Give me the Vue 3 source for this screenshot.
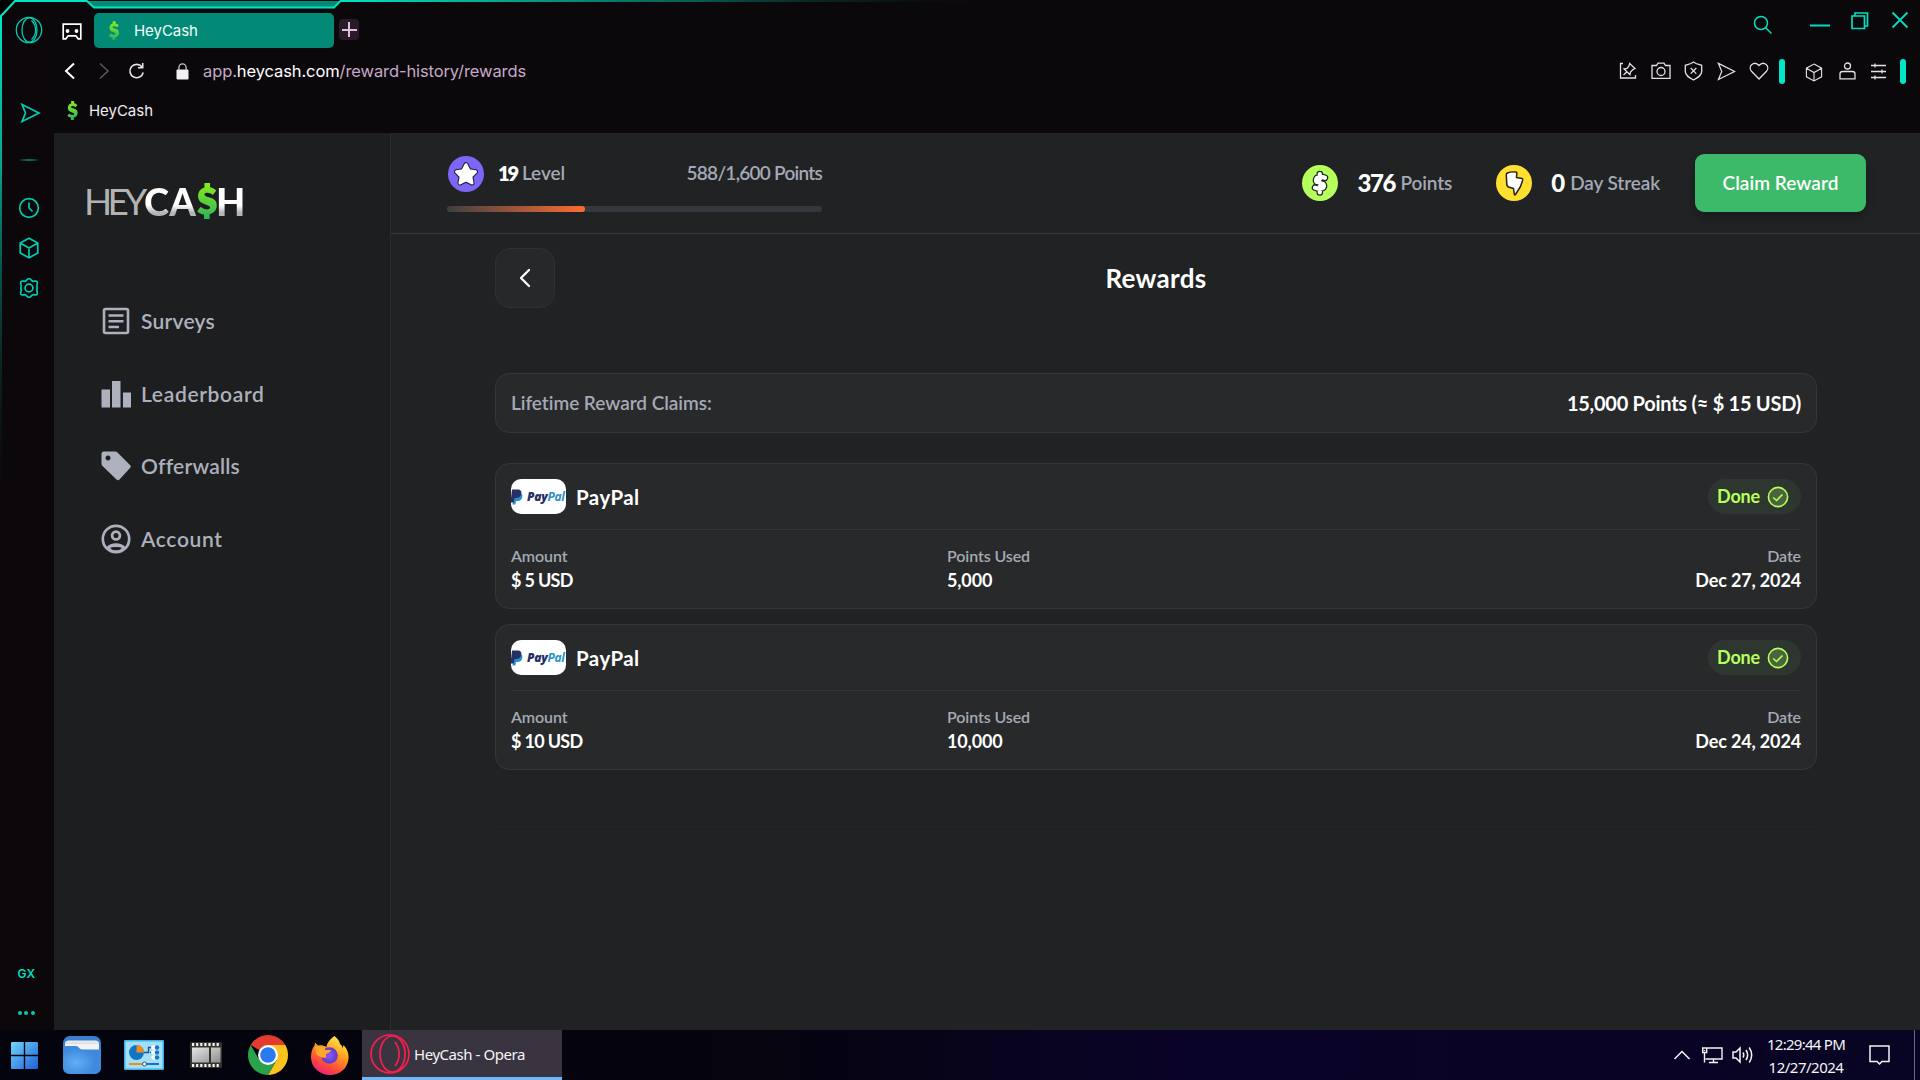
<script setup>
const navItems = [
  { id: 'surveys', label: 'Surveys', spacing: 0.25 },
  { id: 'leaderboard', label: 'Leaderboard', spacing: 0.66 },
  { id: 'offerwalls', label: 'Offerwalls', spacing: 0.22 },
  { id: 'account', label: 'Account', spacing: 0.66 },
]

const level = { current: 588, target: 1600 }
const progress = (level.current / level.target) * 100

const claims = [
  { method: 'PayPal', amount: '$ 5 USD', points: '5,000', date: 'Dec 27, 2024' },
  { method: 'PayPal', amount: '$ 10 USD', points: '10,000', date: 'Dec 24, 2024' },
]
</script>

<template>
  <div class="screen">
    <svg class="defs" width="0" height="0" aria-hidden="true">
      <defs>
        <linearGradient id="cashGreen" x1="0" y1="0" x2="0" y2="1">
          <stop offset="0" stop-color="#86ee1e" />
          <stop offset="1" stop-color="#2fb457" />
        </linearGradient>
        <linearGradient id="frameTop" gradientUnits="userSpaceOnUse" x1="0" y1="0" x2="1000" y2="0">
          <stop offset="0" stop-color="#00e6c3" />
          <stop offset=".35" stop-color="#00dfbd" />
          <stop offset=".7" stop-color="#055a50" />
          <stop offset="1" stop-color="#0a0a0c" stop-opacity="0" />
        </linearGradient>
        <linearGradient id="frameLeft" gradientUnits="userSpaceOnUse" x1="0" y1="16" x2="0" y2="520">
          <stop offset="0" stop-color="#00e6c3" />
          <stop offset=".3" stop-color="#07a28d" />
          <stop offset="1" stop-color="#0a0a0c" stop-opacity="0" />
        </linearGradient>
        <symbol id="dollar" viewBox="0 0 19 35">
          <path d="M7 0h5.500v4.200c2.500.4 4.600 1.600 6 3.200l-3.300 4.300c-1.700-1.500-3.500-2.300-5.500-2.300-1.700 0-2.700.6-2.700 1.700 0 1.300 1.500 1.800 4.300 2.700C15.500 15 19 16.600 19 21.700c0 4.800-2.900 7.800-7 8.700V35H6.600v-4.300C3.900 30.400 1.600 29.200 0 27.400l3.400-4.300c1.900 1.800 3.900 2.600 6 2.600 1.900 0 3.100-.7 3.100-1.900 0-1.400-1.500-2-4.500-3C4 19.500.8 17.600.8 12.900c0-4.300 2.600-7.600 6.200-8.500z" />
        </symbol>
        <symbol id="send" viewBox="0 0 20 20"><path d="M1.500 1.500 18.500 10 1.500 18.500 5 10z" /></symbol>
        <symbol id="cube" viewBox="0 0 20 22"><path d="M10 1.200 18.800 6v10L10 20.800 1.200 16V6zM1.200 6 10 11l8.800-5M10 11v9.800" /></symbol>
      </defs>
    </svg>

    <div class="browser">
      <svg class="frame" width="1920" height="1030" fill="none">
        <path d="M0 0H15L0 16Z" fill="#000" />
        <path d="M88 1 95 7.500H334L340 1Z" fill="#028a76" />
        <path d="M1 1030V16L15 1H87L94 7.500H334L340.500 1H1000" stroke="url(#frameTop)" stroke-width="2" class="frame-line" />
        <rect x="0" y="17" width="2" height="700" fill="url(#frameLeft)" />
      </svg>

      <aside class="rail">
        <svg class="rail-opera" width="28" height="28" viewBox="0 0 28 28">
          <circle cx="14" cy="14" r="12.700" /><ellipse cx="14.500" cy="14" rx="7.500" ry="12.200" /><path d="M16.500 4.500c5.500 5 5.500 14 0 19" />
        </svg>
        <svg class="rail-send" width="20" height="20"><use href="#send" /></svg>
        <span class="rail-dash"></span>
        <svg width="22" height="22" viewBox="0 0 22 22"><circle cx="11" cy="11" r="9.300" /><path d="M11 5.500V11l3.500 3.500" /></svg>
        <svg width="20" height="22"><use href="#cube" /></svg>
        <svg width="22" height="22" viewBox="0 0 22 22">
          <circle cx="11" cy="11" r="3.900" />
          <path d="M8.600 3.100Q11 .1 13.400 3.100 14.600 4.600 16.600 4.200 20.400 3.800 19.100 7.400 18.300 9.300 19.300 11 18.300 12.700 19.100 14.600 20.400 18.200 16.600 17.800 14.600 17.400 13.400 18.900 11 21.900 8.600 18.900 7.400 17.400 5.400 17.800 1.600 18.200 2.900 14.600 3.700 12.700 2.700 11 3.700 9.300 2.900 7.400 1.600 3.800 5.400 4.200 7.400 4.600 8.600 3.100Z" stroke-linejoin="round" />
        </svg>
        <span class="rail-gx">GX</span>
        <span class="rail-dots"><i></i><i></i><i></i></span>
      </aside>

      <div class="window">
        <div class="tabs">
          <svg class="corner-icon" width="20" height="18" viewBox="0 0 20 18">
            <path d="M1.200 1.200h17.600v14.600h-2.600l-2.400-3H6.200l-2.400 3H1.200z" fill="none" stroke="#fff" stroke-width="1.700" />
            <circle cx="5.500" cy="8" r="1.900" fill="#fff" /><circle cx="14.500" cy="8" r="1.900" fill="#fff" />
          </svg>
          <div class="tab">
            <svg width="10" height="19"><use href="#dollar" fill="url(#cashGreen)" /></svg>
            <span>HeyCash</span>
          </div>
          <span class="new-tab"></span>
          <div class="win-controls">
            <svg width="20" height="20" viewBox="0 0 20 20"><circle cx="8" cy="8" r="6.500" /><path d="m12.500 12.500 6 6" /></svg>
            <svg width="20" height="20" viewBox="0 0 20 20"><path d="M0 12.500h20" stroke-width="2" /></svg>
            <svg width="18" height="18" viewBox="0 0 18 18"><path d="M1 4h12.500v12.500H1zM4 4V1h12.500v13H13.500" stroke-width="1.700" /></svg>
            <svg width="18" height="18" viewBox="0 0 18 18"><path d="m1.500 1.500 15 15m0-15-15 15" stroke-width="1.800" /></svg>
          </div>
        </div>

        <div class="address">
          <svg width="12" height="18" viewBox="0 0 12 18"><path d="M10 1.500 2 9l8 7.500" stroke="#fff" stroke-width="2" /></svg>
          <svg width="12" height="18" viewBox="0 0 12 18"><path d="M2 1.500 10 9l-8 7.500" stroke="#5d5a5f" stroke-width="1.500" /></svg>
          <svg width="17" height="18" viewBox="0 0 17 18"><path d="M14 5A6.700 6.700 0 1 0 15.200 10.500M14.700 1v4.700H10" stroke="#e8e4e8" stroke-width="1.600" /></svg>
          <svg class="lock" width="13" height="17" viewBox="0 0 13 17"><rect x=".5" y="6.500" width="12" height="10" rx="1" fill="#f4eef5" /><path d="M2.900 7V4.500a3.600 3.600 0 0 1 7.200 0V7" stroke="#c9c4ca" stroke-width="1.300" /></svg>
          <span class="url">app.<b>heycash.com</b>/reward-history/rewards</span>
          <div class="tools">
            <svg width="18" height="18" viewBox="0 0 18 18"><path d="M4 1.500H1.500V16h15v-3M4.500 13 8 9.700M10.700 1.500 16 6.500 14 7.500 11.500 10 11 12.700 5 7 8 6.500 10 4Z" /></svg>
            <svg width="20" height="18" viewBox="0 0 20 18"><path d="M1 3.500h4.500L7 1.200h6l1.500 2.300H19v12.800H1z" /><circle cx="10" cy="9.500" r="4" /></svg>
            <svg width="19" height="20" viewBox="0 0 19 20"><path d="m9.500 1 2.500 1.500 5.700 1.800v6.200c0 4-4 6.200-8.200 8.500-4.200-2.300-8.200-4.500-8.200-8.500V4.300L7 2.500zM6.700 7l5.600 5.600m0-5.600-5.600 5.600" /></svg>
            <svg width="19" height="19"><use href="#send" /></svg>
            <svg width="20" height="18" viewBox="0 0 20 18"><path d="M10 17 2.500 9.300C-1.500 4.500 5-2 10 3.500 15-2 21.500 4.500 17.500 9.300Z" /></svg>
            <i class="divider"></i>
            <svg class="tool-cube" width="18" height="19"><use href="#cube" /></svg>
            <svg width="17" height="18" viewBox="0 0 17 18"><circle cx="8.500" cy="4" r="3" /><path d="M1 16.800V12q0-2.500 2.500-2.500h10Q16 9.500 16 12v4.800z" /></svg>
            <svg width="17" height="18" viewBox="0 0 17 18"><path d="M1 3.500h15M1 9.500h15M1 15.500h15M5 1.500v4M12 7.500v4M5 13.500v4" /></svg>
            <i class="divider"></i>
          </div>
        </div>

        <div class="bookmarks">
          <svg width="11" height="19"><use href="#dollar" fill="url(#cashGreen)" /></svg>
          <span>HeyCash</span>
        </div>

        <div class="page">
          <nav class="sidebar">
            <div class="logo">
              <span class="hey">HEY</span><span class="cash">CA</span>
              <svg width="20" height="36"><use href="#dollar" fill="url(#cashGreen)" /></svg>
              <span class="cash last">H</span>
            </div>
            <ul class="menu">
              <li v-for="item in navItems" :key="item.id">
                <svg width="30" height="30" viewBox="0 0 30 30">
                  <template v-if="item.id === 'surveys'">
                    <rect x="3" y="3" width="24" height="24" rx="1.500" fill="none" stroke="currentColor" stroke-width="2.600" />
                    <path d="M7.500 9.500h15M7.500 15.200h15M7.500 21h10.500" stroke="currentColor" stroke-width="2.600" />
                  </template>
                  <path v-else-if="item.id === 'leaderboard'" d="M.5 10.500h8.500V28.500H.500zM11 2h8.500v26.500H11zM22 13.500h8.300v15H22z" fill="currentColor" />
                  <path v-else-if="item.id === 'offerwalls'" fill-rule="evenodd" fill="currentColor" d="M3 .5H14q1.500 0 2.500 1L29 14q1.500 1.500 0 3L18.500 28.500q-1.500 1.500-3 0L1.500 15Q.5 14 .5 12.500V3Q.5.5 3 .5ZM7 4.500a2.500 2.500 0 1 0 .01 0Z" />
                  <template v-else>
                    <circle cx="15" cy="15" r="13.200" fill="none" stroke="currentColor" stroke-width="2.700" />
                    <circle cx="15" cy="11.500" r="3.900" fill="none" stroke="currentColor" stroke-width="2.700" />
                    <path d="M6 24c4.500-5 13.500-5 18 0M7.500 23.500c4-2 11-2 15 0-4 5-11 5-15 0Z" fill="none" stroke="currentColor" stroke-width="2" />
                    <path d="M9.500 24.500c3-1.500 8-1.500 11 0-3 2-8 2-11 0Z" fill="#1d1e1f" />
                  </template>
                </svg>
                <span :style="{ letterSpacing: item.spacing + 'px' }">{{ item.label }}</span>
              </li>
            </ul>
          </nav>

          <main class="main">
            <header class="topbar">
              <div class="level">
                <div class="level-row">
                  <svg width="38" height="38" viewBox="0 0 38 38">
                    <circle cx="19" cy="19" r="18" fill="#7d66f7" />
                    <path d="M19 9.700 22 15.700 28.500 16.700 23.800 21.400 25 28 19 25 13 28 14.200 21.400 9.500 16.700 16 15.700Z" fill="#fff" stroke="#1d1a33" stroke-width="5" stroke-linejoin="round" />
                    <path d="M19 9.700 22 15.700 28.500 16.700 23.800 21.400 25 28 19 25 13 28 14.200 21.400 9.500 16.700 16 15.700Z" fill="#fff" stroke="#fff" stroke-width="3" stroke-linejoin="round" />
                  </svg>
                  <span class="level-num">19</span><span class="muted">Level</span>
                  <span class="level-points">588/1,600 Points</span>
                </div>
                <div class="bar"><div class="bar-fill" :style="{ width: progress + '%' }"></div></div>
              </div>
              <div class="stats">
                <svg width="38" height="38" viewBox="0 0 38 38">
                  <circle cx="19" cy="19" r="18" fill="#b6ff5c" />
                  <path d="M18.800 10v18.500M24 13.800Q19 11.800 15.800 14 13.500 17.500 17 18.600L21.500 19.700Q24 21 22.500 23.500 19 26 14 23.600" fill="none" stroke="#20251a" stroke-width="6.600" stroke-linecap="round" stroke-linejoin="round" />
                  <path d="M18.800 10v18.500M24 13.800Q19 11.800 15.800 14 13.500 17.500 17 18.600L21.500 19.700Q24 21 22.500 23.500 19 26 14 23.600" fill="none" stroke="#fff" stroke-width="4.200" stroke-linecap="round" stroke-linejoin="round" />
                  <path d="M25.500 16.700h-5.500M12.500 20.700h5" stroke="#20251a" stroke-width="1.100" />
                </svg>
                <span class="stat-num n376">376</span><span class="muted">Points</span>
                <svg class="streak" width="38" height="38" viewBox="0 0 38 38">
                  <circle cx="19" cy="19" r="18" fill="#ffe02f" />
                  <path d="M12.500 9q3-1.500 8.500-1 1 0 .8 1.500L21.500 13.500 27 14.500q1 .3.700 1.500L25.500 22.500 20.500 30.500q-.8 1-1.200-.3L18.500 24.500 13.500 23q-2-1-1.800-4.500L11.300 10.500Q11.500 9.500 12.500 9Z" fill="#fff" stroke="#25221a" stroke-width="1.500" stroke-linejoin="round" />
                </svg>
                <span class="stat-num">0</span><span class="muted">Day Streak</span>
                <button class="claim">Claim Reward</button>
              </div>
            </header>

            <section class="content">
              <div class="title-row">
                <button class="back" aria-label="Back">
                  <svg width="12" height="20" viewBox="0 0 12 20"><path d="M10 2 2 10l8 8" fill="none" stroke="#fff" stroke-width="2.300" stroke-linecap="round" stroke-linejoin="round" /></svg>
                </button>
                <h1>Rewards</h1>
              </div>

              <div class="lifetime">
                <span>Lifetime Reward Claims:</span>
                <strong>15,000 Points (≈ $ 15 USD)</strong>
              </div>

              <div class="claims">
                <article v-for="claim in claims" :key="claim.date" class="card">
                  <div class="card-head">
                    <div class="paypal-logo">
                      <svg width="12" height="16" viewBox="0 0 12 16">
                        <path d="M2.800 4H8c3 0 4 2 3.200 4.500C10.500 11 9 12 6.500 12H5l-.6 3.500H1.500z" fill="#2a8fc8" />
                        <path d="M1 .5h5.500C9.500.5 11 2 10.200 5 9.500 8 7.500 9 5 9H3.500l-.8 4.500H0V9z" fill="#263066" />
                      </svg>
                      <span><b>Pay</b>Pal</span>
                    </div>
                    <h2>{{ claim.method }}</h2>
                    <div class="badge">
                      <span>Done</span>
                      <svg width="22" height="22" viewBox="0 0 22 22" fill="none" stroke="#b6ff5c">
                        <circle cx="11" cy="11" r="9.600" fill="#4b6440" stroke-width="1.600" />
                        <path d="m6.200 11.500 3.300 3 6-6" stroke-width="1.600" />
                      </svg>
                    </div>
                  </div>
                  <div class="card-body">
                    <div><small>Amount</small><p class="tight">{{ claim.amount }}</p></div>
                    <div><small>Points Used</small><p>{{ claim.points }}</p></div>
                    <div><small>Date</small><p>{{ claim.date }}</p></div>
                  </div>
                </article>
              </div>
              <div class="end-line"></div>
            </section>
          </main>
        </div>
      </div>
    </div>

    <footer class="taskbar">
      <svg class="start" width="27" height="27" viewBox="0 0 27 27">
        <defs><linearGradient id="win" x1="0" y1="0" x2="1" y2="1"><stop offset="0" stop-color="#6fd6fb" /><stop offset="1" stop-color="#1f5fd8" /></linearGradient></defs>
        <path d="M0 1Q0 0 1 0H12.800V12.800H0ZM14.200 0H26q1 0 1 1V12.800H14.200ZM0 14.200H12.800V27H1q-1 0-1-1ZM14.200 14.200H27V26q0 1-1 1H14.200Z" fill="url(#win)" />
      </svg>
      <svg class="folder" width="38" height="38" viewBox="0 0 38 38">
        <defs><radialGradient id="fold" cx=".35" cy=".6"><stop offset="0" stop-color="#62adf5" /><stop offset="1" stop-color="#3f8add" /></radialGradient></defs>
        <rect width="38" height="38" rx="7" fill="#3a80cf" />
        <path d="M2 13V8q0-3.500 4-3.500h26q4 0 4 3.500v8H2z" fill="#f3f3f6" />
        <path d="M3 7.500h32M4 6h30" stroke="#cfd2da" stroke-width=".7" />
        <path d="M0 10h13q2 0 3 1.700T19 13.500h19V31q0 7-7 7H7q-7 0-7-7z" fill="url(#fold)" />
      </svg>
      <svg class="panel" width="40" height="30" viewBox="0 0 40 30">
        <rect x=".7" y=".7" width="38.600" height="28.600" rx="1" fill="#a5def5" stroke="#35b4ee" stroke-width="1.600" />
        <circle cx="12.500" cy="12.500" r="7.500" fill="#1175c6" /><path d="M12.500 12.500V5a7.500 7.500 0 0 1 7.500 7.500z" fill="#f28b1c" />
        <path d="M20 12.500h4.500V7.500H28M26 12.500h4M27 17.500h3" stroke="#14578c" stroke-width="1.400" fill="none" />
        <g fill="#fff"><rect x="27" y="5.500" width="8" height="4" rx="2" /><rect x="27" y="10.500" width="8" height="4" rx="2" /><rect x="27" y="15.500" width="8" height="4" rx="2" /></g>
        <g fill="#1175c6"><circle cx="33" cy="7.500" r="2.200" /><circle cx="33" cy="12.500" r="2.200" /><circle cx="33" cy="17.500" r="2.200" /></g>
        <path d="M5 24h14" stroke="#f28b1c" stroke-width="2" /><path d="M22 24h13" stroke="#1175c6" stroke-width="2" /><circle cx="20.500" cy="24" r="2" fill="#fff" stroke="#14578c" />
      </svg>
      <svg class="film" width="32" height="26" viewBox="0 0 32 26">
        <defs><linearGradient id="filmG" x1="0" y1="0" x2="1" y2="1"><stop offset="0" stop-color="#e6e6e6" /><stop offset="1" stop-color="#8d8d8d" /></linearGradient></defs>
        <rect width="32" height="26" rx="1.500" fill="#33322f" />
        <path d="M2 2.500h28M2 23.500h28" stroke="#f2f2f2" stroke-width="2.800" stroke-dasharray="2.200 1.900" />
        <path d="M2 5.500h17v15H2zM21 5.500h9.500v15H21z" fill="url(#filmG)" />
      </svg>
      <svg class="chrome" width="40" height="40" viewBox="0 0 40 40">
        <path d="M20 20 2.680 10A20 20 0 0 1 37.320 10Z" fill="#e33b2e" />
        <path d="M20 10H37.320A20 20 0 0 1 20 40L28.660 25Z" fill="#fcc31e" />
        <path d="M2.680 10A20 20 0 0 0 20 40L28.660 25 20 20 11.340 25Z" fill="#2aa24c" />
        <circle cx="20" cy="20" r="10" fill="#fff" /><circle cx="20" cy="20" r="7.800" fill="#2a7bee" />
      </svg>
      <svg class="firefox" width="38" height="39" viewBox="0 0 38 39">
        <defs>
          <linearGradient id="fox" x1=".8" y1="0" x2=".3" y2="1"><stop offset="0" stop-color="#fff14f" /><stop offset=".4" stop-color="#ffa21f" /><stop offset=".75" stop-color="#ff4a3a" /><stop offset="1" stop-color="#e6207e" /></linearGradient>
          <radialGradient id="globe"><stop offset="0" stop-color="#9058ff" /><stop offset="1" stop-color="#5a3cc4" /></radialGradient>
        </defs>
        <path d="M23.500 0c3 2.500 5 5 5.500 8 1.500 1 2.500 2.500 2.800 4.500L32.500 9C36 13 38 17 37.500 22.500 37 32 29 39 19 39S0 31.500 0 21.500c0-5 1-9 3.500-12L4 6.500 7 9.500c3-.5 6 0 8.500 1.500C16 7 19 3 23.500 0Z" fill="url(#fox)" />
        <circle cx="18.500" cy="19.500" r="8.300" fill="url(#globe)" />
        <path d="M4 11c5-2 9 0 10.500 3H20c0 2.500-4 3-5 4.500-.5 1.500.5 3 .5 3-4 1-8-1-10.500-4z" fill="#ffa62b" />
      </svg>
      <div class="task-app">
        <svg width="40" height="40" viewBox="0 0 40 40" fill="none" stroke="#fa1e4e" stroke-width="1.700">
          <circle cx="20" cy="20" r="19" /><ellipse cx="22.500" cy="20" rx="12.500" ry="18" /><path d="M25 8c5.500 7 5.500 17 0 24" />
        </svg>
        <span>HeyCash - Opera</span>
      </div>
      <div class="tray">
        <svg width="18" height="12" viewBox="0 0 18 12"><path d="m1.500 10 7.500-7.500 7.500 7.500" /></svg>
        <svg class="net" width="21" height="17" viewBox="0 0 21 17"><path d="M5.500 1H20v11H3.500M11.500 12v3.500M7 15.500h9M2.500 6v9.500M.7 1h4v4.500h-4zM2.500 3v1" stroke-width="1.400" /></svg>
        <svg class="vol" width="22" height="20" viewBox="0 0 22 20"><path d="M1 7h3l4-4v14l-4-4H1zM11 7.500q1.500 2.500 0 5M14 5q3.300 5 0 10M17.200 2.500q5 7.500 0 15" /></svg>
        <div class="clock"><span>12:29:44 PM</span><span class="date">12/27/2024</span></div>
        <svg class="notes" width="21" height="21" viewBox="0 0 21 21"><path d="M1 1h19v15.500h-7L10.500 19 8 16.500H1z" /></svg>
        <i class="peek"></i>
      </div>
    </footer>
  </div>
</template>

<style>
body { background: #0b080b; overflow: hidden; }
</style>

<style scoped>
* { box-sizing: border-box; margin: 0; padding: 0; }
svg { display: block; flex: none; }
.defs { position: absolute; }
.screen { width: 1920px; height: 1080px; display: flex; flex-direction: column; overflow: hidden; font-family: Lato, "Noto Sans", sans-serif; }
.browser { position: relative; height: 1030px; display: flex; background: #0b080b; }
.frame { position: absolute; inset: 0; pointer-events: none; }
.frame-line { clip-path: inset(0 0 1013px 0); }

.rail { width: 54px; padding: 16px 0 0 4px; display: flex; flex-direction: column; align-items: center; background: #0c070b; }
.rail svg { fill: none; stroke: #00cdb0; stroke-width: 1.700; margin-bottom: 18px; }
.rail .rail-opera { margin-bottom: 59px; stroke-width: 1.300; }
.rail .rail-send { margin: 0 -1px 36px 1px; width: 21px; }
.rail-dash { width: 24px; height: 2px; margin-bottom: 36px; background: radial-gradient(closest-side, #00cdb0, transparent); }
.rail-gx { margin: auto 5px 28px 0; font: 600 12px/18px Inter, sans-serif; color: #00dfbd; letter-spacing: .3px; }
.rail-dots { display: flex; gap: 2.500px; margin: 0 6px 15px 0; }
.rail-dots i { width: 4px; height: 4px; border-radius: 50%; background: #00cdb0; }

.window { flex: 1; display: flex; flex-direction: column; font-family: Inter, sans-serif; }
.tabs { height: 49px; padding: 13px 11px 0 8px; display: flex; align-items: flex-start; }
.corner-icon { margin: 10px 12px 0 0; }
.tab { width: 240px; height: 35px; padding: 0 15px; display: flex; align-items: center; gap: 15px; border-radius: 5px; background: #028a76; color: #f3fffc; font-size: 15px; letter-spacing: -.05px; }
.new-tab { width: 20px; height: 21px; margin: 6px 0 0 5px; border-radius: 4px; background: linear-gradient(#dcc3dc, #dcc3dc) center / 15px 2px no-repeat, linear-gradient(#dcc3dc, #dcc3dc) center / 2px 15px no-repeat, #281a29; }
.win-controls { margin-left: auto; display: flex; align-items: flex-start; fill: none; stroke: #00dfbd; stroke-width: 1.500; }
.win-controls svg:nth-child(1) { margin: 2px 37px 0 0; }
.win-controls svg:nth-child(2) { margin-right: 21px; }
.win-controls svg:nth-child(3) { margin: -1px 22px 0 0; }
.win-controls svg:nth-child(4) { margin-top: -2px; }

.address { height: 44px; padding: 0 14px 0 10px; display: flex; align-items: center; fill: none; }
.address > svg:nth-child(2) { margin-left: 22px; }
.address > svg:nth-child(3) { margin-left: 18px; }
.address .lock { margin: 0 14px 0 31px; }
.url { color: #c6a9c8; font-size: 16.500px; letter-spacing: -.1px; }
.url b { font-weight: 400; color: #fff; }
.tools { margin-left: auto; display: flex; align-items: center; gap: 13.400px; stroke: #e6dfe6; stroke-width: 1.300; }
.divider { width: 6px; height: 25px; border-radius: 3px; background: #00e6c8; margin-left: -3px; }
.divider:last-child { margin-left: 0; }
.tool-cube { margin: 2px 3px 0 6px; }

.bookmarks { height: 40px; padding: 0 0 5px 13px; display: flex; align-items: center; gap: 11px; color: #f1ecf1; font-size: 15px; }
.bookmarks span { letter-spacing: -.03px; }

.page { flex: 1; display: flex; background: #202223; font-family: Lato, "Noto Sans", sans-serif; }
.sidebar { width: 337px; border-right: 1px solid #2a2b2e; background: #1d1e1f; }
.logo { height: 36px; margin: 50px 0 0 30px; display: flex; align-items: center; font-size: 38px; line-height: 36px; }
.hey { width: 60px; font-weight: 400; font-size: 37px; letter-spacing: -4.700px; color: #b3b3b3; }
.cash { width: 53px; font-weight: 900; letter-spacing: .3px; background: linear-gradient(#fff 62%, #b5b5b5 82%); -webkit-background-clip: text; background-clip: text; color: transparent; }
.cash.last { width: 30px; margin-left: -1px; }
.menu { list-style: none; margin-top: 84px; padding-left: 47px; }
.menu li { height: 72.500px; padding-bottom: 36px; display: flex; align-items: center; gap: 10px; color: #adb1bd; font-size: 21px; font-weight: 600; }
.menu span { padding-bottom: 1px; }

.main { flex: 1; display: flex; flex-direction: column; }
.topbar { height: 101px; padding: 0 54px 0 56px; display: flex; justify-content: space-between; align-items: flex-start; border-bottom: 1px solid #37393c; }
.muted { color: #a4a9b5; font-size: 19px; font-weight: 600; letter-spacing: -.1px; }
.level { width: 375px; padding-top: 22px; }
.level-row { display: flex; align-items: center; height: 38px; }
.level-row span { padding-bottom: 3px; }
.level-num { margin: 0 6px 0 13px; width: 18px; font-size: 20px; font-weight: 800; letter-spacing: -2.200px; color: #fff; }
.level-points { margin-left: auto; color: #a4a9b5; font-size: 19px; font-weight: 600; letter-spacing: -.75px; }
.bar { height: 6px; margin-top: 13px; border-radius: 3px; background: #363840; overflow: hidden; }
.bar-fill { height: 100%; border-radius: 3px; background: linear-gradient(90deg, #3d3f40, #ff6c33); }
.stats { display: flex; align-items: center; padding-top: 21px; }
.stats > span { padding-bottom: 2px; }
.stat-num { margin: 0 5px 0 18px; font-size: 24px; font-weight: 900; color: #fff; }
.n376 { letter-spacing: -1.400px; width: 38px; }
.streak { margin-left: 43px; }
.claim { width: 171px; height: 58px; margin-left: 35px; padding-bottom: 1px; border: 0; border-radius: 9px; background: #3cba69; box-shadow: 0 6px 10px rgba(0, 0, 0, .2); color: #fff; font: 600 19px Lato, sans-serif; letter-spacing: .05px; }

.content { padding: 14px 103px 0 104px; }
.title-row { display: grid; grid-template-columns: 60px 1fr 60px; align-items: center; }
.back { width: 60px; height: 60px; display: grid; place-items: center; border: 1px solid #303134; border-radius: 15px; background: #27282a; }
h1 { text-align: center; font-size: 26px; line-height: 30px; font-weight: 700; letter-spacing: .3px; color: #fff; }
.lifetime { height: 60px; margin-top: 65px; padding: 0 15px 1px; display: flex; justify-content: space-between; align-items: center; border: 1px solid #34363a; border-radius: 14px; background: #28292b; color: #a4a9b5; font-size: 19px; font-weight: 600; letter-spacing: -.04px; }
.lifetime strong { color: #fff; font-size: 20px; font-weight: 700; letter-spacing: -.26px; }
.claims { margin-top: 30px; display: flex; flex-direction: column; gap: 15px; }
.card { height: 146px; padding: 15px; border: 1px solid #34363a; border-radius: 14px; background: #28292b; }
.card-head { height: 51px; padding-bottom: 15px; display: flex; align-items: center; border-bottom: 1px solid #34363a; }
.paypal-logo { width: 55px; height: 35px; display: flex; align-items: center; gap: 4px; border-radius: 10px; background: #fff; overflow: hidden; font: italic 700 12px "Open Sans", sans-serif; color: #2a8fc8; letter-spacing: -.3px; }
.paypal-logo b { color: #263066; }
h2 { margin-left: 10px; color: #fff; font-size: 20.500px; font-weight: 700; letter-spacing: .45px; }
.badge { height: 35px; margin-left: auto; padding: 0 12px 0 9px; display: flex; align-items: center; gap: 7px; border-radius: 18px; background: #2e372f; color: #b6ff5c; font-size: 18px; font-weight: 700; letter-spacing: -.17px; }
.badge span { padding-bottom: 1px; }
.card-body { padding-top: 15px; display: grid; grid-template-columns: 436px 1fr auto; }
.card-body div:last-child { text-align: right; }
small { display: block; color: #a4a9b5; font-size: 16px; line-height: 21px; font-weight: 600; letter-spacing: -.1px; }
p { color: #fff; font-size: 18px; line-height: 29px; font-weight: 700; letter-spacing: -.15px; }
.tight { letter-spacing: -.68px; }
.end-line { height: 1px; margin-top: 56px; background: #242527; }

.taskbar { height: 50px; display: flex; align-items: center; background: linear-gradient(90deg, #04040e, #05040f 40%, #0a0328 62%, #080423); color: #f4f4f6; font-family: "Noto Sans", sans-serif; }
.start { margin-left: 11px; }
.folder { margin-left: 25px; }
.panel { margin-left: 23px; }
.film { margin-left: 26px; }
.chrome { margin-left: 26px; }
.firefox { margin: 0 13px 0 23px; }
.task-app { width: 200px; height: 50px; padding: 1px 0 0 8px; display: flex; align-items: center; gap: 4px; background: #393440; border-bottom: 3px solid #6cb8fa; font-size: 15px; letter-spacing: -.45px; white-space: nowrap; }
.tray { flex: 1; display: flex; align-items: center; justify-content: flex-end; height: 50px; fill: none; stroke: #f4f4f6; stroke-width: 1.500; }
.net { margin-left: 11px; }
.vol { margin: 0 12px 0 9px; }
.clock { width: 80px; padding-top: 1px; display: flex; flex-direction: column; align-items: center; font-size: 15px; line-height: 23px; letter-spacing: -.73px; white-space: nowrap; }
.clock .date { letter-spacing: -.5px; }
.notes { margin-left: 23px; }
.peek { width: 1px; height: 50px; margin: 0 5px 0 24px; background: #6b6880; }
</style>
